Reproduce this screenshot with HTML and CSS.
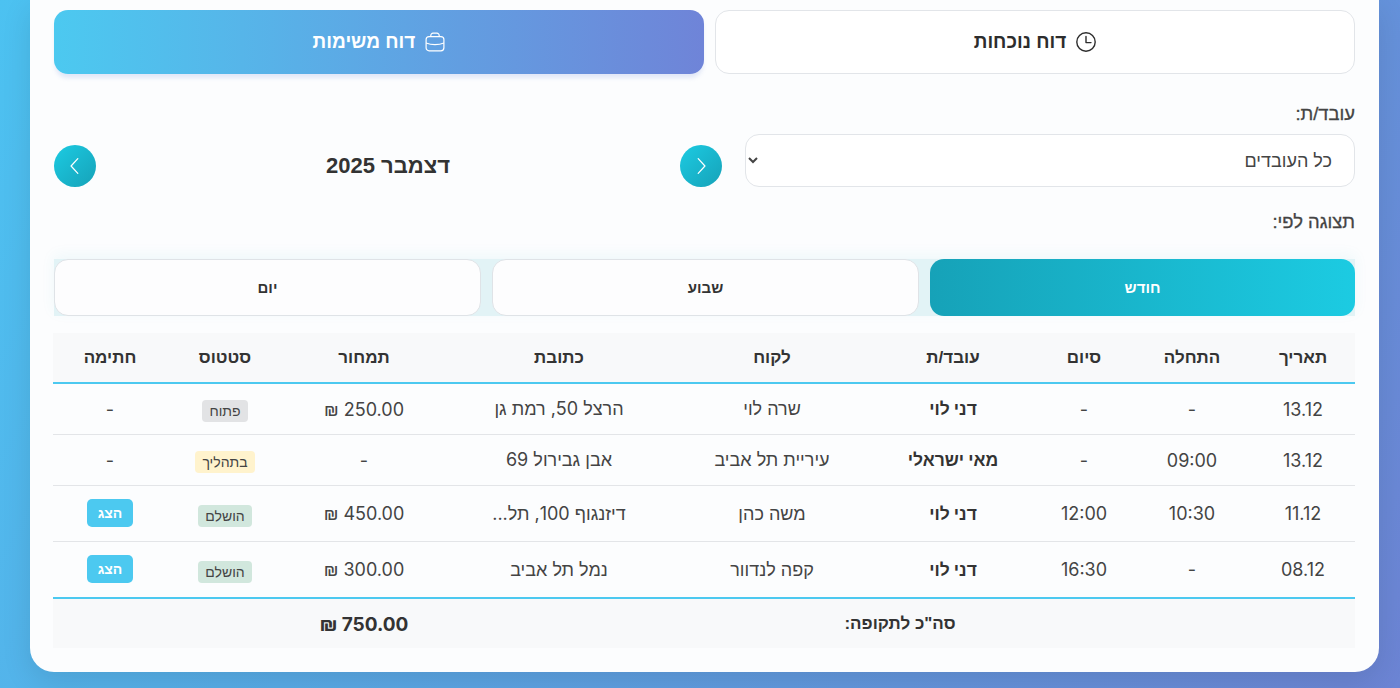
FILE: index.html
```html
<!DOCTYPE html>
<html lang="he" dir="rtl">
<head>
<meta charset="utf-8">
<title>דוחות</title>
<link rel="stylesheet" href="styles.css">
</head>
<body>
<main class="card">
  <div class="tabs">
    <button class="tab tab-plain">
      <svg class="tab-icon" viewBox="0 0 20 20" fill="none" stroke="currentColor" stroke-width="1.4"><circle cx="10" cy="10" r="9.2"/><path d="M10 4.5V10.6H15" stroke-linecap="round" stroke-linejoin="round"/></svg>
      <span>דוח נוכחות</span>
    </button>
    <button class="tab tab-active">
      <svg class="tab-icon" viewBox="0 0 20 20" fill="none" stroke="currentColor" stroke-width="1.2"><rect x="1.1" y="4.6" width="17.8" height="14.2" rx="3"/><path d="M5.8 4.6V3.4a2.2 2.2 0 0 1 2.2-2.2h4a2.2 2.2 0 0 1 2.2 2.2v1.2M1.1 11c3 1.2 5.6 1.6 8.9 1.6s5.9-.4 8.9-1.6"/></svg>
      <span>דוח משימות</span>
    </button>
  </div>

  <label class="label label-worker">עובד/ת:</label>
  <div class="filter-row">
    <select class="select"><option>כל העובדים</option></select>
    <div class="month-nav">
      <button class="round"><svg viewBox="0 0 16 16" fill="none" stroke="currentColor" stroke-width="1.1"><path d="M5.5 1.5 11.5 8l-6 6.5" stroke-linecap="round" stroke-linejoin="round"/></svg></button>
      <h2 class="month">דצמבר 2025</h2>
      <button class="round"><svg viewBox="0 0 16 16" fill="none" stroke="currentColor" stroke-width="1.1"><path d="M10.5 1.5 4.5 8l6 6.5" stroke-linecap="round" stroke-linejoin="round"/></svg></button>
    </div>
  </div>

  <label class="label label-view">תצוגה לפי:</label>
  <div class="views">
    <button class="view view-active">חודש</button>
    <button class="view">שבוע</button>
    <button class="view">יום</button>
  </div>

  <table class="report">
    <colgroup>
      <col class="c1"><col class="c2"><col class="c3"><col class="c4"><col class="c5"><col class="c6"><col class="c7"><col class="c8"><col class="c9">
    </colgroup>
    <thead>
      <tr><th>תאריך</th><th>התחלה</th><th>סיום</th><th>עובד/ת</th><th>לקוח</th><th>כתובת</th><th>תמחור</th><th>סטטוס</th><th>חתימה</th></tr>
    </thead>
    <tbody>
      <tr>
        <td>13.12</td><td>-</td><td>-</td><td class="name">דני לוי</td><td>שרה לוי</td><td>הרצל 50, רמת גן</td><td>250.00 ₪</td>
        <td><span class="badge badge-open">פתוח</span></td><td>-</td>
      </tr>
      <tr>
        <td>13.12</td><td>09:00</td><td>-</td><td class="name">מאי ישראלי</td><td>עיריית תל אביב</td><td>אבן גבירול 69</td><td>-</td>
        <td><span class="badge badge-progress">בתהליך</span></td><td>-</td>
      </tr>
      <tr class="tall">
        <td>11.12</td><td>10:30</td><td>12:00</td><td class="name">דני לוי</td><td>משה כהן</td><td>דיזנגוף 100, תל...</td><td>450.00 ₪</td>
        <td><span class="badge badge-done">הושלם</span></td><td class="action"><button class="show">הצג</button></td>
      </tr>
      <tr class="tall last">
        <td>08.12</td><td>-</td><td>16:30</td><td class="name">דני לוי</td><td>קפה לנדוור</td><td>נמל תל אביב</td><td>300.00 ₪</td>
        <td><span class="badge badge-done">הושלם</span></td><td class="action"><button class="show">הצג</button></td>
      </tr>
    </tbody>
    <tfoot>
      <tr><td colspan="6">סה"כ לתקופה:</td><td class="sum">750.00 ₪</td><td colspan="2"></td></tr>
    </tfoot>
  </table>
</main>
</body>
</html>
```

FILE: styles.css
```css
* { box-sizing: border-box; }
html, body { height: 688px; overflow: hidden; }
body {
  margin: 0;
  padding: 0 21px 16px 30px;
  background: linear-gradient(120deg, #4cc2f1 0%, #6c84d4 100%);
  font-family: "Inter", "Liberation Sans", sans-serif;
  color: #333;
}
button, select { font-family: inherit; }
.card {
  height: 672px;
  padding: 10px 24px 0;
  background: #fcfdfe;
  border-radius: 0 0 24px 24px;
  box-shadow: 0 10px 30px rgba(0, 0, 0, .1);
}
.tabs { display: flex; gap: 11px; height: 64px; }
.tab {
  display: flex; align-items: center; justify-content: center; gap: 10px;
  border-radius: 14px; font-size: 19px; font-weight: 700; cursor: pointer;
  font-family: "Liberation Sans", sans-serif;
}
.tab-plain { flex: 1; background: #fff; border: 1px solid #e2e5e9; color: #2d2d2d; }
.tab-active {
  flex: 0 0 650px; border: 0; color: #fff;
  background: linear-gradient(90deg, #4cc9f0, #6f84d8);
  box-shadow: 0 5px 4px -1px rgba(108, 132, 216, .18);
}
.tab-icon { width: 20px; height: 20px; flex: none; }
.label {
  display: block; font-size: 18.4px; font-weight: 400; color: #444;
  font-family: "Liberation Sans", sans-serif; -webkit-text-stroke: .3px #444;
}
.label-worker { margin-top: 29px; line-height: 22px; }
.filter-row { display: flex; gap: 23px; margin-top: 9px; height: 53px; }
.select {
  width: 610px; height: 53px; padding: 0 18px 0 4px;
  background: #fff; border: 1px solid #e2e5e9; border-radius: 14px;
  font-size: 18px; color: #444;
}
.month-nav { flex: 1; display: flex; align-items: center; justify-content: space-between; padding-top: 11px; height: 53px; }
.round {
  width: 42px; height: 42px; padding: 12px; border: 0; border-radius: 50%;
  background: linear-gradient(135deg, #1ccbe2, #16a2b8); color: #fff;
  display: flex; align-items: center; justify-content: center;
}
.round svg { width: 18px; height: 18px; flex: none; }
.month { margin: 0; font-size: 22px; font-weight: 700; color: #333; font-family: "Liberation Sans", sans-serif; }
.label-view { margin-top: 24px; line-height: 22px; }
.views {
  display: flex; gap: 11px; margin-top: 26px; height: 57px;
  background: #e2f3f6; box-shadow: 0 -4px 14px rgba(23, 162, 184, .06);
}
.view {
  flex: 1; background: #fdfdfe; border: 1px solid #dfe3e7; border-radius: 14px;
  font-size: 15px; font-weight: 700; color: #333; font-family: "Liberation Sans", sans-serif;
}
.view-active { flex: 0 0 425px; border: 0; color: #fff; background: linear-gradient(270deg, #1ccbe2, #16a2b8); }
.report { width: 100%; margin-top: 17px; border-collapse: collapse; table-layout: fixed; }
.c1 { width: 104px; } .c2 { width: 118px; } .c3 { width: 98px; } .c4 { width: 164px; }
.c5 { width: 198px; } .c6 { width: 228px; } .c7 { width: 162px; } .c8 { width: 116px; } .c9 { width: 114px; }
th {
  height: 50px; background: #f8f9fa; border-bottom: 2px solid #4cc9f0;
  font-size: 17px; font-weight: 700; color: #333; text-align: center; padding: 0;
  font-family: "Liberation Sans", sans-serif;
}
td { text-align: center; padding: 0; font-size: 18px; color: #444; }
tbody td { height: 51px; padding-top: 1px; border-bottom: 1px solid #e3e5e8; font-family: "Inter", "Liberation Sans", sans-serif; }
tbody tr.tall td { height: 56px; }
tbody tr.last td { height: 57px; border-bottom: 0; }
tbody td.name { font-weight: 700; font-size: 17.5px; color: #333; }
tbody td.action { padding-top: 0; padding-bottom: 1px; }
.badge {
  display: inline-block; padding: 3px 7px; border-radius: 4px; font-size: 14px; line-height: 16px; color: #444;
  font-family: "Liberation Sans", sans-serif; vertical-align: -3px;
}
.badge-open { background: #e2e3e5; }
.badge-progress { background: #fff3cd; }
.badge-done { background: #d1e7dd; }
.show {
  width: 46px; height: 28px; padding: 0; border: 0; border-radius: 5px;
  background: #4cc9f0; color: #fff; font-size: 14px; font-weight: 700; vertical-align: middle;
  font-family: "Liberation Sans", sans-serif;
}
tfoot td { height: 50px; padding-top: 1px; background: #f8f9fa; border-top: 2px solid #4cc9f0; font-weight: 700; font-size: 17px; color: #333; font-family: "Liberation Sans", sans-serif; }
td.sum { font-size: 19px; font-family: "Inter", "Liberation Sans", sans-serif; }
```
